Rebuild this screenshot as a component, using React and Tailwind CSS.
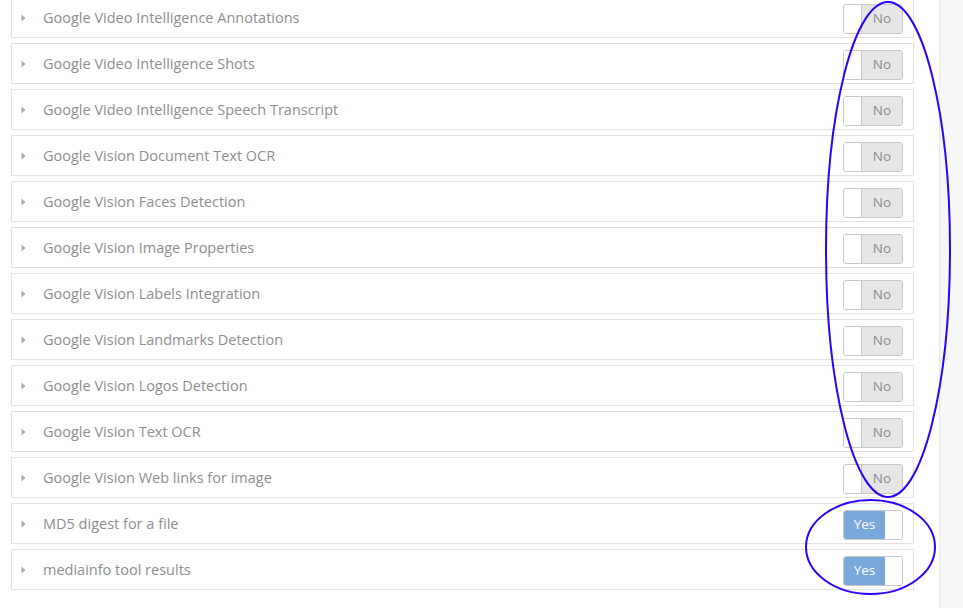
import React from 'react';

const plugins = [
    { name: 'Google Video Intelligence Annotations', on: false },
    { name: 'Google Video Intelligence Shots', on: false },
    { name: 'Google Video Intelligence Speech Transcript', on: false },
    { name: 'Google Vision Document Text OCR', on: false },
    { name: 'Google Vision Faces Detection', on: false },
    { name: 'Google Vision Image Properties', on: false },
    { name: 'Google Vision Labels Integration', on: false },
    { name: 'Google Vision Landmarks Detection', on: false },
    { name: 'Google Vision Logos Detection', on: false },
    { name: 'Google Vision Text OCR', on: false },
    { name: 'Google Vision Web links for image', on: false },
    { name: 'MD5 digest for a file', on: true },
    { name: 'mediainfo tool results', on: true },
];

const Toggle = ({ on }) => {
    if (on) {
        return (
            <div className="flex h-[30px] w-[60px] overflow-hidden rounded-[3px] border border-[#c8c8c8]">
                <div className="flex w-[41px] items-center justify-center bg-[#79a8db] text-[13.5px] text-white">Yes</div>
                <div className="flex-1 bg-white"></div>
            </div>
        );
    }
    return (
        <div className="flex h-[30px] w-[60px] overflow-hidden rounded-[3px] border border-[#c8c8c8]">
            <div className="w-[18px] bg-white border-r border-[#c8c8c8]"></div>
            <div className="flex flex-1 items-center justify-center bg-[#e6e6e6] text-[13.5px] text-[#8c8c8c]">No</div>
        </div>
    );
};

const App = () => {
    return (
        <div className="relative flex h-[608px] w-[963px] overflow-hidden bg-white font-['Open_Sans',sans-serif]">
            <main className="w-[940px] border-r border-[#e8e8e8] pl-[11px] pr-[25px]">
                <div className="-mt-[3px] flex flex-col gap-[5px]">
                    {plugins.map((p) => (
                        <div key={p.name} className="flex h-[41px] items-center border border-[#e2e2e2] bg-white pl-[9px] pr-[10px]">
                            <svg width="5" height="8" viewBox="0 0 5 8" className="shrink-0">
                                <path d="M0.5 0.5 L4.5 4 L0.5 7.5 Z" fill="#a8a8a8" />
                            </svg>
                            <span className="ml-[17px] flex-1 text-[14.5px] text-[#8e8e8e]">{p.name}</span>
                            <div className="mt-[2px]">
                                <Toggle on={p.on} />
                            </div>
                        </div>
                    ))}
                </div>
            </main>
            <aside className="flex-1 bg-[#f7f7f7]"></aside>

            {/* annotation ellipses drawn over the page */}
            <svg className="pointer-events-none absolute left-0 top-0" width="963" height="608">
                <ellipse cx="888" cy="249.5" rx="62" ry="247.5" fill="none" stroke="#2f00ff" strokeWidth="2" />
                <ellipse cx="870.5" cy="547" rx="64.5" ry="47" fill="none" stroke="#2f00ff" strokeWidth="2" />
            </svg>
        </div>
    );
};

export default App;
